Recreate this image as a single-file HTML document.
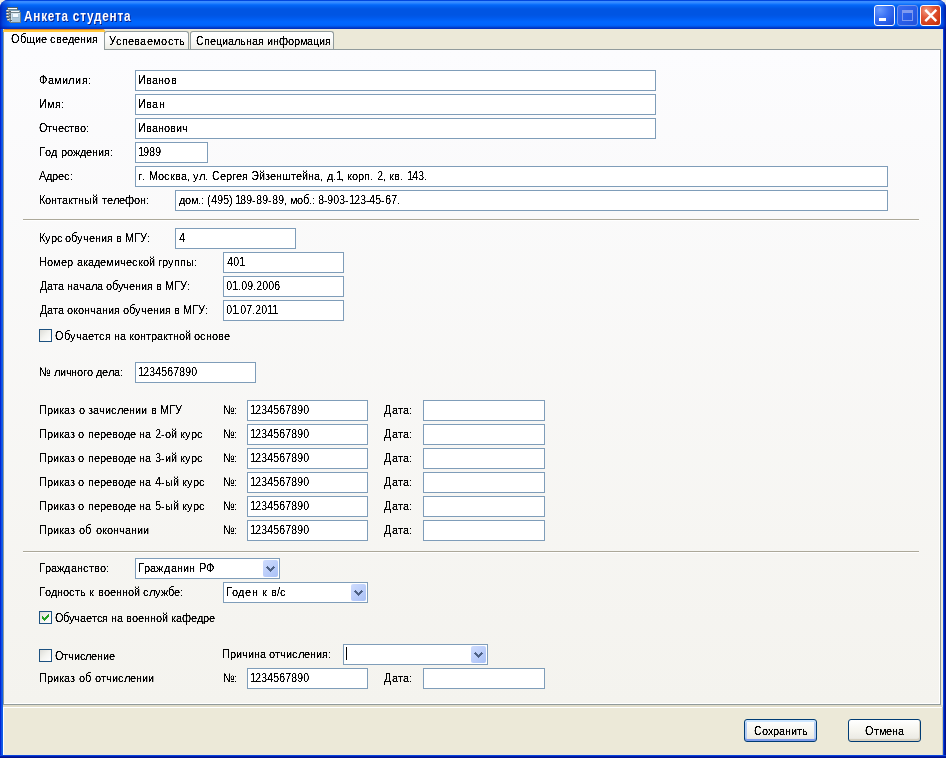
<!DOCTYPE html><html lang="ru"><head><meta charset="utf-8"><title>Анкета студента</title><style>

html,body{margin:0;padding:0}
body{width:946px;height:758px;overflow:hidden;background:#efefe8;position:relative;font-family:"Liberation Sans", sans-serif;font-size:11px;color:#000}
.a{position:absolute}
.t{position:absolute;white-space:nowrap;line-height:13px;height:13px;transform-origin:0 0;font-size:11px}
.t.title{font-weight:bold;font-size:13px;color:#fff;line-height:16px;height:16px;text-shadow:1px 1px 0 #0a1883}
.t i{display:inline-block;font-style:normal;height:13px;vertical-align:top}
.T{transform:scaleY(1.14);transform-origin:0 10.3px}
.D{transform:scale(0.95,1.14);transform-origin:3px 10.3px}
.w0{width:0px}.w1{width:1px}.w2{width:2px}.w3{width:3px}.w4{width:4px}.w5{width:5px}.w6{width:6px}.w7{width:7px}.w8{width:8px}.w9{width:9px}.w10{width:10px}.w11{width:11px}.w12{width:12px}.w13{width:13px}.w14{width:14px}.w15{width:15px}
.in{position:absolute;box-sizing:border-box;border:1px solid #7f9db9;background:#fff}
.cb{position:absolute;box-sizing:border-box;width:13px;height:13px;border:1px solid #1c5180;background:linear-gradient(135deg,#dcdcd7 0%,#f3f3ef 50%,#fff 100%)}
.dd{position:absolute;width:15px;height:17px;right:1px;top:1px;border-radius:2px;background:linear-gradient(135deg,#cfdcfd 0%,#bccefa 50%,#a8c0f6 100%)}

</style></head><body>
<div class="a" style="left:0;top:0;width:946px;height:758px;background:#0831d9;border-radius:8px 8px 0 0"></div>
<div class="a" style="left:0;top:29px;width:3px;height:729px;background:linear-gradient(90deg,#0019cf 0,#0831d9 33%,#166aee 66%,#0855dd 100%)"></div>
<div class="a" style="left:943px;top:29px;width:3px;height:729px;background:linear-gradient(90deg,#0a44dc 0,#0a44dc 1px,#001ba8 1px,#001ba8 2px,#00128c 2px)"></div>
<div class="a" style="left:0;top:755px;width:946px;height:3px;background:linear-gradient(180deg,#0a44dc 0,#0a44dc 1px,#001ba8 1px,#001ba8 2px,#00128c 2px)"></div>
<div class="a" style="left:0;top:0;width:946px;height:29px;border-radius:8px 8px 0 0;background:linear-gradient(180deg,#0047e0 0px,#0047e0 1px,#3a8cff 1px,#3a8cff 2px,#2c86ff 3px,#1376ff 4px,#0468f8 5px,#005eee 7px,#0055e3 9px,#0055e3 15px,#0058ea 17px,#005ef2 19px,#0066ff 22px,#0064fc 25px,#005cf0 26px,#0040d0 27.5px,#002cb8 29px)"></div>
<div class="a" style="left:0;top:0;width:12px;height:29px;border-radius:8px 0 0 0;background:linear-gradient(90deg,rgba(0,20,170,.8) 0,rgba(0,28,185,.45) 3px,rgba(0,40,200,0) 11px)"></div>
<div class="a" style="left:936px;top:0;width:10px;height:29px;border-radius:0 8px 0 0;background:linear-gradient(270deg,rgba(0,16,150,.85) 0,rgba(0,28,185,.4) 3px,rgba(0,40,200,0) 9px)"></div>
<div class="a" style="left:3px;top:29px;width:940px;height:726px;background:#ece9d8"></div>
<div class="a" id="ttl" style="left:24.3px;top:6px;white-space:nowrap;font-weight:bold;font-size:14px;line-height:20px;color:#fff;text-shadow:1px 1px 0 #0a1883;transform-origin:0 0;letter-spacing:0.92px;transform:scaleX(0.84)">Анкета студента</div>
<svg class="a" style="left:5px;top:7px" width="16" height="16" viewBox="0 0 16 16"><rect x="2" y="0" width="11" height="12" fill="#50616b"/><rect x="3" y="1" width="9" height="1" fill="#fdfefe"/><rect x="3" y="2" width="9" height="1" fill="#6f8794"/><rect x="4" y="3" width="11" height="12" fill="#7f9fb3"/><rect x="5" y="4" width="9" height="1" fill="#f4f9fc"/><rect x="5" y="5" width="11" height="11" fill="#6f8189"/><rect x="6" y="6" width="9" height="9" fill="#b5cede"/><rect x="6" y="6" width="9" height="1" fill="#d4e4ee"/><rect x="6" y="6" width="1" height="9" fill="#cfe0eb"/><rect x="8" y="7" width="5" height="3" fill="#f3faff"/><rect x="7" y="10" width="7" height="1" fill="#9fbbcd"/><rect x="7" y="11" width="8" height="4" fill="#aec8d9"/><rect x="1" y="3" width="4" height="2" rx="0.8" fill="#8a8c8a"/><rect x="1.5" y="3" width="2" height="1" fill="#f2f2f0"/><rect x="4" y="4" width="2" height="1" fill="#5d6468"/><rect x="1" y="6" width="4" height="2" rx="0.8" fill="#8a8c8a"/><rect x="1.5" y="6" width="2" height="1" fill="#f2f2f0"/><rect x="4" y="7" width="2" height="1" fill="#5d6468"/><rect x="1" y="9" width="4" height="2" rx="0.8" fill="#8a8c8a"/><rect x="1.5" y="9" width="2" height="1" fill="#f2f2f0"/><rect x="4" y="10" width="2" height="1" fill="#5d6468"/><rect x="2" y="12" width="4" height="2" rx="0.8" fill="#8a8c8a"/><rect x="2.5" y="12" width="2" height="1" fill="#f2f2f0"/><rect x="5" y="13" width="2" height="1" fill="#5d6468"/></svg>
<div class="a" style="left:874px;top:5px;width:21px;height:21px;box-sizing:border-box;border:1px solid #fff;border-radius:3px;background:radial-gradient(circle at 25% 20%,#6a9bff 0%,#3b72f4 40%,#2459e4 75%,#1b46c8 100%)"></div>
<div class="a" style="left:897px;top:5px;width:21px;height:21px;box-sizing:border-box;border:1px solid #7296ee;border-radius:3px;background:linear-gradient(135deg,#3a6cf0 0%,#2a5ee8 50%,#2152dc 100%)"></div>
<div class="a" style="left:920px;top:5px;width:21px;height:21px;box-sizing:border-box;border:1px solid #fff;border-radius:3px;background:radial-gradient(circle at 30% 25%,#f0a088 0%,#e3593a 35%,#d13a14 75%,#b82a08 100%)"></div>
<div class="a" style="left:879px;top:18px;width:7px;height:3px;background:#fff"></div>
<div class="a" style="left:902px;top:10px;width:11px;height:11px;box-sizing:border-box;border:1px solid #7f9af0;border-top-width:3px"></div>
<svg class="a" style="left:920px;top:5px" width="21" height="21" viewBox="0 0 21 21"><path d="M5.3 4.9 L16.3 16.1 M16.3 4.9 L5.3 16.1" stroke="#fff" stroke-width="2.4" stroke-linecap="butt"/></svg>
<div class="a" style="left:3px;top:49px;width:938px;height:656px;box-sizing:border-box;border:1px solid #919b9c;background:linear-gradient(180deg,#fcfcfe 0%,#f4f3ee 100%);box-shadow:inset -1px -1px 0 #fff"></div>
<div class="a" style="left:104px;top:31px;width:85px;height:18px;box-sizing:border-box;border:1px solid #919b9c;border-bottom:none;border-radius:3px 3px 0 0;background:linear-gradient(180deg,#ffffff 0%,#fafaf9 50%,#f0f0ea 85%,#ecebe6 100%)"></div>
<div class="a" style="left:190px;top:31px;width:144px;height:18px;box-sizing:border-box;border:1px solid #919b9c;border-bottom:none;border-radius:3px 3px 0 0;background:linear-gradient(180deg,#ffffff 0%,#fafaf9 50%,#f0f0ea 85%,#ecebe6 100%)"></div>
<div class="a" style="left:3px;top:29px;width:102px;height:21px;box-sizing:border-box;border:1px solid #919b9c;border-bottom:none;border-top:none;border-radius:3px 3px 0 0;background:#fcfcfe"></div>
<div class="a" style="left:3px;top:29px;width:102px;height:3px;border-radius:3px 3px 0 0;background:linear-gradient(180deg,#e68b2c 0,#e68b2c 33%,#ffc73c 34%,#ffc73c 100%)"></div>
<div class="a" style="left:23px;top:219px;width:896px;height:1px;background:#aca899"></div>
<div class="a" style="left:23px;top:220px;width:896px;height:1px;background:#fff"></div>
<div class="a" style="left:23px;top:551px;width:896px;height:1px;background:#aca899"></div>
<div class="a" style="left:23px;top:552px;width:896px;height:1px;background:#fff"></div>
<div class="a" style="left:3px;top:705px;width:940px;height:2px;background:#e0dcc9"></div>
<div class="a" style="left:3px;top:707px;width:940px;height:1px;background:#fff"></div>
<div class="a" style="left:3px;top:707px;width:1px;height:48px;background:#fff"></div>
<div class="a" style="left:942px;top:707px;width:1px;height:48px;background:#c9c4ae"></div>
<div class="in" style="left:135px;top:70px;width:521px;height:21px"></div>
<div class="in" style="left:135px;top:94px;width:521px;height:21px"></div>
<div class="in" style="left:135px;top:118px;width:521px;height:21px"></div>
<div class="in" style="left:135px;top:142px;width:73px;height:21px"></div>
<div class="in" style="left:135px;top:166px;width:753px;height:21px"></div>
<div class="in" style="left:175px;top:190px;width:713px;height:21px"></div>
<div class="in" style="left:175px;top:228px;width:121px;height:21px"></div>
<div class="in" style="left:223px;top:252px;width:121px;height:21px"></div>
<div class="in" style="left:223px;top:276px;width:121px;height:21px"></div>
<div class="in" style="left:223px;top:300px;width:121px;height:21px"></div>
<div class="in" style="left:135px;top:362px;width:121px;height:21px"></div>
<div class="in" style="left:247px;top:400px;width:121px;height:21px"></div>
<div class="in" style="left:423px;top:400px;width:122px;height:21px"></div>
<div class="in" style="left:247px;top:424px;width:121px;height:21px"></div>
<div class="in" style="left:423px;top:424px;width:122px;height:21px"></div>
<div class="in" style="left:247px;top:448px;width:121px;height:21px"></div>
<div class="in" style="left:423px;top:448px;width:122px;height:21px"></div>
<div class="in" style="left:247px;top:472px;width:121px;height:21px"></div>
<div class="in" style="left:423px;top:472px;width:122px;height:21px"></div>
<div class="in" style="left:247px;top:496px;width:121px;height:21px"></div>
<div class="in" style="left:423px;top:496px;width:122px;height:21px"></div>
<div class="in" style="left:247px;top:520px;width:121px;height:21px"></div>
<div class="in" style="left:423px;top:520px;width:122px;height:21px"></div>
<div class="in" style="left:247px;top:668px;width:121px;height:21px"></div>
<div class="in" style="left:423px;top:668px;width:122px;height:21px"></div>
<div class="in" style="left:135px;top:558px;width:145px;height:21px"><div class="dd"></div><svg class="a" style="right:1px;top:1px" width="15" height="17" viewBox="0 0 15 17" shape-rendering="crispEdges"><rect x="4" y="6" width="1" height="1" fill="#4d6185"/><rect x="10" y="6" width="1" height="1" fill="#4d6185"/><rect x="3" y="7" width="3" height="1" fill="#4d6185"/><rect x="9" y="7" width="3" height="1" fill="#4d6185"/><rect x="4" y="8" width="3" height="1" fill="#4d6185"/><rect x="8" y="8" width="3" height="1" fill="#4d6185"/><rect x="5" y="9" width="5" height="1" fill="#4d6185"/><rect x="6" y="10" width="3" height="1" fill="#4d6185"/><rect x="7" y="11" width="1" height="1" fill="#4d6185"/></svg></div>
<div class="in" style="left:223px;top:582px;width:145px;height:21px"><div class="dd"></div><svg class="a" style="right:1px;top:1px" width="15" height="17" viewBox="0 0 15 17" shape-rendering="crispEdges"><rect x="4" y="6" width="1" height="1" fill="#4d6185"/><rect x="10" y="6" width="1" height="1" fill="#4d6185"/><rect x="3" y="7" width="3" height="1" fill="#4d6185"/><rect x="9" y="7" width="3" height="1" fill="#4d6185"/><rect x="4" y="8" width="3" height="1" fill="#4d6185"/><rect x="8" y="8" width="3" height="1" fill="#4d6185"/><rect x="5" y="9" width="5" height="1" fill="#4d6185"/><rect x="6" y="10" width="3" height="1" fill="#4d6185"/><rect x="7" y="11" width="1" height="1" fill="#4d6185"/></svg></div>
<div class="in" style="left:343px;top:644px;width:145px;height:21px"><div class="dd"></div><svg class="a" style="right:1px;top:1px" width="15" height="17" viewBox="0 0 15 17" shape-rendering="crispEdges"><rect x="4" y="6" width="1" height="1" fill="#4d6185"/><rect x="10" y="6" width="1" height="1" fill="#4d6185"/><rect x="3" y="7" width="3" height="1" fill="#4d6185"/><rect x="9" y="7" width="3" height="1" fill="#4d6185"/><rect x="4" y="8" width="3" height="1" fill="#4d6185"/><rect x="8" y="8" width="3" height="1" fill="#4d6185"/><rect x="5" y="9" width="5" height="1" fill="#4d6185"/><rect x="6" y="10" width="3" height="1" fill="#4d6185"/><rect x="7" y="11" width="1" height="1" fill="#4d6185"/></svg></div>
<div class="a" style="left:346px;top:647px;width:1px;height:13px;background:#000"></div>
<div class="cb" style="left:39px;top:329px"></div>
<div class="cb" style="left:39px;top:611px"><svg class="a" style="left:0;top:0" width="11" height="11" viewBox="0 0 11 11" shape-rendering="crispEdges"><rect x="2" y="4" width="1" height="3" fill="#21a121"/><rect x="3" y="5" width="1" height="3" fill="#21a121"/><rect x="4" y="6" width="1" height="3" fill="#21a121"/><rect x="5" y="5" width="1" height="3" fill="#21a121"/><rect x="6" y="4" width="1" height="3" fill="#21a121"/><rect x="7" y="3" width="1" height="3" fill="#21a121"/><rect x="8" y="2" width="1" height="3" fill="#21a121"/></svg></div>
<div class="cb" style="left:39px;top:649px"></div>
<div class="a" style="left:744px;top:719px;width:73px;height:23px;box-sizing:border-box;border:1px solid #003c74;border-radius:3px;background:linear-gradient(180deg,#ffffff 0%,#f6f5ef 50%,#ecebe5 86%,#d6d0c5 100%);box-shadow:inset 0 2px 0 #cee7ff, inset 0 -2px 0 #7d9bea, inset 2px 0 0 #b4cdf5, inset -2px 0 0 #b4cdf5"></div>
<div class="a" style="left:848px;top:719px;width:73px;height:23px;box-sizing:border-box;border:1px solid #003c74;border-radius:3px;background:linear-gradient(180deg,#ffffff 0%,#f6f5ef 50%,#ecebe5 86%,#d6d0c5 100%);box-shadow:inset -1px -2px 0 0 #d6d0c0"></div>
<svg width="0" height="0" style="position:absolute"><filter id="thr" x="0" y="0" width="100%" height="100%" color-interpolation-filters="sRGB"><feComponentTransfer><feFuncA type="linear" slope="4.000" intercept="-1.200"/></feComponentTransfer></filter></svg>
<div class="a" style="left:0;top:0;width:946px;height:758px;filter:url(#thr);">
<div class="t" style="left:11px;top:33px;"><i class="w9 T">О</i><i class="w6 T">б</i><i class="w9">щ</i><i class="w6">и</i><i class="w6">е</i><i class="w3"></i><i class="w6">с</i><i class="w6">в</i><i class="w6">е</i><i class="w6">д</i><i class="w6">е</i><i class="w6">н</i><i class="w6">и</i><i class="w6">я</i></div>
<div class="t" style="left:109px;top:35px;"><i class="w7 T">У</i><i class="w6">с</i><i class="w6">п</i><i class="w6">е</i><i class="w6">в</i><i class="w7">а</i><i class="w6">е</i><i class="w8">м</i><i class="w7">о</i><i class="w6">с</i><i class="w5">т</i><i class="w6">ь</i></div>
<div class="t" style="left:196px;top:35px;"><i class="w8 T">С</i><i class="w6">п</i><i class="w6">е</i><i class="w6">ц</i><i class="w6">и</i><i class="w6">а</i><i class="w6">л</i><i class="w6">ь</i><i class="w6">н</i><i class="w6">а</i><i class="w6">я</i><i class="w3"></i><i class="w6">и</i><i class="w6">н</i><i class="w9 T">ф</i><i class="w6">о</i><i class="w6">р</i><i class="w7">м</i><i class="w6">а</i><i class="w6">ц</i><i class="w6">и</i><i class="w6">я</i></div>
<div class="t" style="left:39px;top:74px;"><i class="w9 T">Ф</i><i class="w6">а</i><i class="w8">м</i><i class="w6">и</i><i class="w7">л</i><i class="w7">и</i><i class="w6">я</i><i class="w3">:</i></div>
<div class="t" style="left:39px;top:98px;"><i class="w8 T">И</i><i class="w8">м</i><i class="w6">я</i><i class="w3">:</i></div>
<div class="t" style="left:39px;top:122px;"><i class="w8 T">О</i><i class="w5">т</i><i class="w6">ч</i><i class="w6">е</i><i class="w5">с</i><i class="w5">т</i><i class="w6">в</i><i class="w6">о</i><i class="w3">:</i></div>
<div class="t" style="left:39px;top:146px;"><i class="w6 T">Г</i><i class="w6">о</i><i class="w6">д</i><i class="w4"></i><i class="w6">р</i><i class="w6">о</i><i class="w7">ж</i><i class="w6">д</i><i class="w6">е</i><i class="w6">н</i><i class="w6">и</i><i class="w6">я</i><i class="w3">:</i></div>
<div class="t" style="left:39px;top:170px;"><i class="w7 T">А</i><i class="w6">д</i><i class="w6">р</i><i class="w6">е</i><i class="w6">с</i><i class="w3">:</i></div>
<div class="t" style="left:39px;top:194px;"><i class="w6 T">К</i><i class="w6">о</i><i class="w6">н</i><i class="w5">т</i><i class="w6">а</i><i class="w5">к</i><i class="w5">т</i><i class="w6">н</i><i class="w8">ы</i><i class="w6 T">й</i><i class="w4"></i><i class="w5">т</i><i class="w6">е</i><i class="w6">л</i><i class="w6">е</i><i class="w9 T">ф</i><i class="w6">о</i><i class="w6">н</i><i class="w3">:</i></div>
<div class="t" style="left:39px;top:232px;"><i class="w6 T">К</i><i class="w6">у</i><i class="w6">р</i><i class="w5">с</i><i class="w3"></i><i class="w6">о</i><i class="w6 T">б</i><i class="w6">у</i><i class="w6">ч</i><i class="w6">е</i><i class="w6">н</i><i class="w6">и</i><i class="w6">я</i><i class="w3"></i><i class="w6">в</i><i class="w3"></i><i class="w9 T">М</i><i class="w6 T">Г</i><i class="w7 T">У</i><i class="w3">:</i></div>
<div class="t" style="left:39px;top:256px;"><i class="w8 T">Н</i><i class="w6">о</i><i class="w8">м</i><i class="w6">е</i><i class="w6">р</i><i class="w4"></i><i class="w6">а</i><i class="w5">к</i><i class="w6">а</i><i class="w6">д</i><i class="w6">е</i><i class="w8">м</i><i class="w6">и</i><i class="w6">ч</i><i class="w6">е</i><i class="w6">с</i><i class="w5">к</i><i class="w6">о</i><i class="w6 T">й</i><i class="w3"></i><i class="w4">г</i><i class="w6">р</i><i class="w6">у</i><i class="w6">п</i><i class="w6">п</i><i class="w8">ы</i><i class="w3">:</i></div>
<div class="t" style="left:40px;top:280px;"><i class="w7 T">Д</i><i class="w6">а</i><i class="w5">т</i><i class="w6">а</i><i class="w3"></i><i class="w6">н</i><i class="w6">а</i><i class="w6">ч</i><i class="w6">а</i><i class="w6">л</i><i class="w6">а</i><i class="w3"></i><i class="w6">о</i><i class="w6 T">б</i><i class="w5">у</i><i class="w6">ч</i><i class="w6">е</i><i class="w6">н</i><i class="w6">и</i><i class="w6">я</i><i class="w3"></i><i class="w6">в</i><i class="w3"></i><i class="w9 T">М</i><i class="w6 T">Г</i><i class="w7 T">У</i><i class="w3">:</i></div>
<div class="t" style="left:40px;top:304px;"><i class="w7 T">Д</i><i class="w6">а</i><i class="w5">т</i><i class="w6">а</i><i class="w3"></i><i class="w6">о</i><i class="w5">к</i><i class="w6">о</i><i class="w6">н</i><i class="w6">ч</i><i class="w6">а</i><i class="w6">н</i><i class="w6">и</i><i class="w6">я</i><i class="w3"></i><i class="w6">о</i><i class="w6 T">б</i><i class="w6">у</i><i class="w6">ч</i><i class="w6">е</i><i class="w6">н</i><i class="w6">и</i><i class="w6">я</i><i class="w3"></i><i class="w6">в</i><i class="w3"></i><i class="w9 T">М</i><i class="w6 T">Г</i><i class="w7 T">У</i><i class="w3">:</i></div>
<div class="t" style="left:55px;top:330px;"><i class="w9 T">О</i><i class="w6 T">б</i><i class="w6">у</i><i class="w6">ч</i><i class="w6">а</i><i class="w6">е</i><i class="w5">т</i><i class="w6">с</i><i class="w6">я</i><i class="w3"></i><i class="w6">н</i><i class="w6">а</i><i class="w3"></i><i class="w5">к</i><i class="w6">о</i><i class="w6">н</i><i class="w5">т</i><i class="w6">р</i><i class="w6">а</i><i class="w5">к</i><i class="w5">т</i><i class="w6">н</i><i class="w6">о</i><i class="w6 T">й</i><i class="w3"></i><i class="w6">о</i><i class="w6">с</i><i class="w6">н</i><i class="w6">о</i><i class="w6">в</i><i class="w6">е</i></div>
<div class="t" style="left:39px;top:366px;"><i class="w12 T">№</i><i class="w3"></i><i class="w6">л</i><i class="w6">и</i><i class="w5">ч</i><i class="w6">н</i><i class="w6">о</i><i class="w4">г</i><i class="w6">о</i><i class="w3"></i><i class="w6">д</i><i class="w6">е</i><i class="w6">л</i><i class="w6">а</i><i class="w3">:</i></div>
<div class="t" style="left:39px;top:404px;"><i class="w8 T">П</i><i class="w6">р</i><i class="w6">и</i><i class="w5">к</i><i class="w6">а</i><i class="w5">з</i><i class="w4"></i><i class="w6">о</i><i class="w3"></i><i class="w5">з</i><i class="w6">а</i><i class="w6">ч</i><i class="w6">и</i><i class="w6">с</i><i class="w6">л</i><i class="w6">е</i><i class="w6">н</i><i class="w6">и</i><i class="w6">и</i><i class="w4"></i><i class="w6">в</i><i class="w3"></i><i class="w9 T">М</i><i class="w6 T">Г</i><i class="w7 T">У</i></div>
<div class="t" style="left:223px;top:404px;"><i class="w11 T">№</i><i class="w3">:</i></div>
<div class="t" style="left:384px;top:404px;"><i class="w8 T">Д</i><i class="w6">а</i><i class="w5">т</i><i class="w6">а</i><i class="w3">:</i></div>
<div class="t" style="left:250px;top:404px;"><i class="w5 D">1</i><i class="w6 D">2</i><i class="w6 D">3</i><i class="w6 D">4</i><i class="w6 D">5</i><i class="w6 D">6</i><i class="w6 D">7</i><i class="w6 D">8</i><i class="w6 D">9</i><i class="w6 D">0</i></div>
<div class="t" style="left:39px;top:428px;"><i class="w8 T">П</i><i class="w6">р</i><i class="w6">и</i><i class="w5">к</i><i class="w6">а</i><i class="w5">з</i><i class="w3"></i><i class="w6">о</i><i class="w4"></i><i class="w6">п</i><i class="w6">е</i><i class="w6">р</i><i class="w6">е</i><i class="w6">в</i><i class="w6">о</i><i class="w6">д</i><i class="w6">е</i><i class="w3"></i><i class="w6">н</i><i class="w6">а</i><i class="w4"></i><i class="w6 D">2</i><i class="w4">-</i><i class="w6">о</i><i class="w6 T">й</i><i class="w3"></i><i class="w5">к</i><i class="w6">у</i><i class="w6">р</i><i class="w6">с</i></div>
<div class="t" style="left:223px;top:428px;"><i class="w11 T">№</i><i class="w3">:</i></div>
<div class="t" style="left:384px;top:428px;"><i class="w8 T">Д</i><i class="w6">а</i><i class="w5">т</i><i class="w6">а</i><i class="w3">:</i></div>
<div class="t" style="left:250px;top:428px;"><i class="w5 D">1</i><i class="w6 D">2</i><i class="w6 D">3</i><i class="w6 D">4</i><i class="w6 D">5</i><i class="w6 D">6</i><i class="w6 D">7</i><i class="w6 D">8</i><i class="w6 D">9</i><i class="w6 D">0</i></div>
<div class="t" style="left:39px;top:452px;"><i class="w8 T">П</i><i class="w6">р</i><i class="w6">и</i><i class="w5">к</i><i class="w6">а</i><i class="w5">з</i><i class="w3"></i><i class="w6">о</i><i class="w4"></i><i class="w6">п</i><i class="w6">е</i><i class="w6">р</i><i class="w6">е</i><i class="w6">в</i><i class="w6">о</i><i class="w6">д</i><i class="w6">е</i><i class="w3"></i><i class="w6">н</i><i class="w6">а</i><i class="w4"></i><i class="w6 D">3</i><i class="w4">-</i><i class="w6">и</i><i class="w6 T">й</i><i class="w3"></i><i class="w5">к</i><i class="w6">у</i><i class="w6">р</i><i class="w6">с</i></div>
<div class="t" style="left:223px;top:452px;"><i class="w11 T">№</i><i class="w3">:</i></div>
<div class="t" style="left:384px;top:452px;"><i class="w8 T">Д</i><i class="w6">а</i><i class="w5">т</i><i class="w6">а</i><i class="w3">:</i></div>
<div class="t" style="left:250px;top:452px;"><i class="w5 D">1</i><i class="w6 D">2</i><i class="w6 D">3</i><i class="w6 D">4</i><i class="w6 D">5</i><i class="w6 D">6</i><i class="w6 D">7</i><i class="w6 D">8</i><i class="w6 D">9</i><i class="w6 D">0</i></div>
<div class="t" style="left:39px;top:476px;"><i class="w8 T">П</i><i class="w6">р</i><i class="w6">и</i><i class="w5">к</i><i class="w6">а</i><i class="w5">з</i><i class="w3"></i><i class="w6">о</i><i class="w4"></i><i class="w6">п</i><i class="w6">е</i><i class="w6">р</i><i class="w6">е</i><i class="w6">в</i><i class="w6">о</i><i class="w6">д</i><i class="w6">е</i><i class="w3"></i><i class="w6">н</i><i class="w6">а</i><i class="w4"></i><i class="w6 D">4</i><i class="w4">-</i><i class="w8">ы</i><i class="w6 T">й</i><i class="w3"></i><i class="w5">к</i><i class="w6">у</i><i class="w6">р</i><i class="w6">с</i></div>
<div class="t" style="left:223px;top:476px;"><i class="w11 T">№</i><i class="w3">:</i></div>
<div class="t" style="left:384px;top:476px;"><i class="w8 T">Д</i><i class="w6">а</i><i class="w5">т</i><i class="w6">а</i><i class="w3">:</i></div>
<div class="t" style="left:250px;top:476px;"><i class="w5 D">1</i><i class="w6 D">2</i><i class="w6 D">3</i><i class="w6 D">4</i><i class="w6 D">5</i><i class="w6 D">6</i><i class="w6 D">7</i><i class="w6 D">8</i><i class="w6 D">9</i><i class="w6 D">0</i></div>
<div class="t" style="left:39px;top:500px;"><i class="w8 T">П</i><i class="w6">р</i><i class="w6">и</i><i class="w5">к</i><i class="w6">а</i><i class="w5">з</i><i class="w3"></i><i class="w6">о</i><i class="w4"></i><i class="w6">п</i><i class="w6">е</i><i class="w6">р</i><i class="w6">е</i><i class="w6">в</i><i class="w6">о</i><i class="w6">д</i><i class="w6">е</i><i class="w3"></i><i class="w6">н</i><i class="w6">а</i><i class="w4"></i><i class="w6 D">5</i><i class="w4">-</i><i class="w8">ы</i><i class="w6 T">й</i><i class="w3"></i><i class="w5">к</i><i class="w6">у</i><i class="w6">р</i><i class="w6">с</i></div>
<div class="t" style="left:223px;top:500px;"><i class="w11 T">№</i><i class="w3">:</i></div>
<div class="t" style="left:384px;top:500px;"><i class="w8 T">Д</i><i class="w6">а</i><i class="w5">т</i><i class="w6">а</i><i class="w3">:</i></div>
<div class="t" style="left:250px;top:500px;"><i class="w5 D">1</i><i class="w6 D">2</i><i class="w6 D">3</i><i class="w6 D">4</i><i class="w6 D">5</i><i class="w6 D">6</i><i class="w6 D">7</i><i class="w6 D">8</i><i class="w6 D">9</i><i class="w6 D">0</i></div>
<div class="t" style="left:39px;top:524px;"><i class="w8 T">П</i><i class="w6">р</i><i class="w6">и</i><i class="w5">к</i><i class="w6">а</i><i class="w5">з</i><i class="w4"></i><i class="w6">о</i><i class="w7 T">б</i><i class="w4"></i><i class="w6">о</i><i class="w5">к</i><i class="w6">о</i><i class="w6">н</i><i class="w6">ч</i><i class="w6">а</i><i class="w6">н</i><i class="w6">и</i><i class="w6">и</i></div>
<div class="t" style="left:223px;top:524px;"><i class="w11 T">№</i><i class="w3">:</i></div>
<div class="t" style="left:384px;top:524px;"><i class="w8 T">Д</i><i class="w6">а</i><i class="w5">т</i><i class="w6">а</i><i class="w3">:</i></div>
<div class="t" style="left:250px;top:524px;"><i class="w5 D">1</i><i class="w6 D">2</i><i class="w6 D">3</i><i class="w6 D">4</i><i class="w6 D">5</i><i class="w6 D">6</i><i class="w6 D">7</i><i class="w6 D">8</i><i class="w6 D">9</i><i class="w6 D">0</i></div>
<div class="t" style="left:39px;top:562px;"><i class="w6 T">Г</i><i class="w6">р</i><i class="w6">а</i><i class="w7">ж</i><i class="w7">д</i><i class="w6">а</i><i class="w6">н</i><i class="w6">с</i><i class="w5">т</i><i class="w6">в</i><i class="w6">о</i><i class="w3">:</i></div>
<div class="t" style="left:39px;top:586px;"><i class="w6 T">Г</i><i class="w6">о</i><i class="w6">д</i><i class="w6">н</i><i class="w6">о</i><i class="w6">с</i><i class="w5">т</i><i class="w6">ь</i><i class="w3"></i><i class="w5">к</i><i class="w4"></i><i class="w6">в</i><i class="w6">о</i><i class="w6">е</i><i class="w6">н</i><i class="w6">н</i><i class="w6">о</i><i class="w6 T">й</i><i class="w3"></i><i class="w6">с</i><i class="w6">л</i><i class="w6">у</i><i class="w7">ж</i><i class="w6 T">б</i><i class="w6">е</i><i class="w3">:</i></div>
<div class="t" style="left:55px;top:612px;"><i class="w8 T">О</i><i class="w6 T">б</i><i class="w5">у</i><i class="w6">ч</i><i class="w6">а</i><i class="w6">е</i><i class="w5">т</i><i class="w5">с</i><i class="w6">я</i><i class="w3"></i><i class="w6">н</i><i class="w6">а</i><i class="w3"></i><i class="w6">в</i><i class="w6">о</i><i class="w6">е</i><i class="w6">н</i><i class="w6">н</i><i class="w6">о</i><i class="w6 T">й</i><i class="w3"></i><i class="w5">к</i><i class="w6">а</i><i class="w9 T">ф</i><i class="w6">е</i><i class="w6">д</i><i class="w6">р</i><i class="w6">е</i></div>
<div class="t" style="left:55px;top:650px;"><i class="w8 T">О</i><i class="w5">т</i><i class="w6">ч</i><i class="w6">и</i><i class="w5">с</i><i class="w6">л</i><i class="w6">е</i><i class="w6">н</i><i class="w6">и</i><i class="w6">е</i></div>
<div class="t" style="left:222px;top:648px;"><i class="w8 T">П</i><i class="w6">р</i><i class="w6">и</i><i class="w6">ч</i><i class="w6">и</i><i class="w6">н</i><i class="w6">а</i><i class="w3"></i><i class="w6">о</i><i class="w5">т</i><i class="w6">ч</i><i class="w6">и</i><i class="w6">с</i><i class="w6">л</i><i class="w6">е</i><i class="w6">н</i><i class="w6">и</i><i class="w6">я</i><i class="w3">:</i></div>
<div class="t" style="left:39px;top:672px;"><i class="w8 T">П</i><i class="w6">р</i><i class="w6">и</i><i class="w5">к</i><i class="w6">а</i><i class="w5">з</i><i class="w4"></i><i class="w6">о</i><i class="w6 T">б</i><i class="w4"></i><i class="w6">о</i><i class="w5">т</i><i class="w6">ч</i><i class="w6">и</i><i class="w6">с</i><i class="w6">л</i><i class="w6">е</i><i class="w6">н</i><i class="w6">и</i><i class="w6">и</i></div>
<div class="t" style="left:223px;top:672px;"><i class="w11 T">№</i><i class="w3">:</i></div>
<div class="t" style="left:384px;top:672px;"><i class="w8 T">Д</i><i class="w6">а</i><i class="w5">т</i><i class="w6">а</i><i class="w3">:</i></div>
<div class="t" style="left:250px;top:672px;"><i class="w5 D">1</i><i class="w6 D">2</i><i class="w6 D">3</i><i class="w6 D">4</i><i class="w6 D">5</i><i class="w6 D">6</i><i class="w6 D">7</i><i class="w6 D">8</i><i class="w6 D">9</i><i class="w6 D">0</i></div>
<div class="t" style="left:138px;top:74px;"><i class="w8 T">И</i><i class="w6">в</i><i class="w6">а</i><i class="w6">н</i><i class="w7">о</i><i class="w6">в</i></div>
<div class="t" style="left:138px;top:98px;"><i class="w8 T">И</i><i class="w6">в</i><i class="w7">а</i><i class="w6">н</i></div>
<div class="t" style="left:138px;top:122px;"><i class="w8 T">И</i><i class="w6">в</i><i class="w6">а</i><i class="w6">н</i><i class="w6">о</i><i class="w6">в</i><i class="w6">и</i><i class="w6">ч</i></div>
<div class="t" style="left:138px;top:146px;"><i class="w5 D">1</i><i class="w6 D">9</i><i class="w6 D">8</i><i class="w6 D">9</i></div>
<div class="t" style="left:138px;top:170px;"><i class="w4">г</i><i class="w3">.</i><i class="w4"></i><i class="w9 T">М</i><i class="w6">о</i><i class="w6">с</i><i class="w5">к</i><i class="w6">в</i><i class="w6">а</i><i class="w3">,</i><i class="w3"></i><i class="w6">у</i><i class="w6">л</i><i class="w3">.</i><i class="w4"></i><i class="w8 T">С</i><i class="w6">е</i><i class="w6">р</i><i class="w4">г</i><i class="w6">е</i><i class="w6">я</i><i class="w3"></i><i class="w8 T">Э</i><i class="w6 T">й</i><i class="w5">з</i><i class="w6">е</i><i class="w6">н</i><i class="w9">ш</i><i class="w5">т</i><i class="w6">е</i><i class="w6 T">й</i><i class="w6">н</i><i class="w6">а</i><i class="w3">,</i><i class="w4"></i><i class="w6">д</i><i class="w3">.</i><i class="w5 D">1</i><i class="w3">,</i><i class="w3"></i><i class="w5">к</i><i class="w6">о</i><i class="w6">р</i><i class="w6">п</i><i class="w3">.</i><i class="w4"></i><i class="w6 D">2</i><i class="w3">,</i><i class="w3"></i><i class="w5">к</i><i class="w6">в</i><i class="w3">.</i><i class="w4"></i><i class="w5 D">1</i><i class="w6 D">4</i><i class="w6 D">3</i><i class="w3">.</i></div>
<div class="t" style="left:179px;top:194px;"><i class="w6">д</i><i class="w6">о</i><i class="w7">м</i><i class="w3">.</i><i class="w3">:</i><i class="w3"></i><i class="w4 T">(</i><i class="w6 D">4</i><i class="w6 D">9</i><i class="w6 D">5</i><i class="w3 T">)</i><i class="w3"></i><i class="w5 D">1</i><i class="w6 D">8</i><i class="w6 D">9</i><i class="w4">-</i><i class="w6 D">8</i><i class="w6 D">9</i><i class="w4">-</i><i class="w6 D">8</i><i class="w6 D">9</i><i class="w3">,</i><i class="w3"></i><i class="w7">м</i><i class="w6">о</i><i class="w6 T">б</i><i class="w3">.</i><i class="w3">:</i><i class="w3"></i><i class="w6 D">8</i><i class="w3">-</i><i class="w6 D">9</i><i class="w6 D">0</i><i class="w6 D">3</i><i class="w4">-</i><i class="w5 D">1</i><i class="w6 D">2</i><i class="w6 D">3</i><i class="w3">-</i><i class="w6 D">4</i><i class="w6 D">5</i><i class="w4">-</i><i class="w6 D">6</i><i class="w6 D">7</i><i class="w3">.</i></div>
<div class="t" style="left:179px;top:232px;"><i class="w6 D">4</i></div>
<div class="t" style="left:227px;top:256px;"><i class="w6 D">4</i><i class="w6 D">0</i><i class="w5 D">1</i></div>
<div class="t" style="left:226px;top:280px;"><i class="w6 D">0</i><i class="w6 D">1</i><i class="w3">.</i><i class="w6 D">0</i><i class="w6 D">9</i><i class="w3">.</i><i class="w6 D">2</i><i class="w6 D">0</i><i class="w6 D">0</i><i class="w6 D">6</i></div>
<div class="t" style="left:226px;top:304px;"><i class="w6 D">0</i><i class="w5 D">1</i><i class="w3">.</i><i class="w6 D">0</i><i class="w6 D">7</i><i class="w3">.</i><i class="w6 D">2</i><i class="w6 D">0</i><i class="w5 D">1</i><i class="w5 D">1</i></div>
<div class="t" style="left:138px;top:366px;"><i class="w5 D">1</i><i class="w6 D">2</i><i class="w6 D">3</i><i class="w6 D">4</i><i class="w6 D">5</i><i class="w6 D">6</i><i class="w6 D">7</i><i class="w6 D">8</i><i class="w6 D">9</i><i class="w6 D">0</i></div>
<div class="t" style="left:138px;top:562px;"><i class="w6 T">Г</i><i class="w6">р</i><i class="w6">а</i><i class="w8">ж</i><i class="w7">д</i><i class="w6">а</i><i class="w6">н</i><i class="w6">и</i><i class="w6">н</i><i class="w4"></i><i class="w7 T">Р</i><i class="w8 T">Ф</i></div>
<div class="t" style="left:226px;top:586px;"><i class="w6 T">Г</i><i class="w6">о</i><i class="w7">д</i><i class="w7">е</i><i class="w6">н</i><i class="w4"></i><i class="w5">к</i><i class="w4"></i><i class="w6">в</i><i class="w3 T">/</i><i class="w6">с</i></div>
<div class="t" style="left:754px;top:725px;"><i class="w8 T">С</i><i class="w6">о</i><i class="w5">х</i><i class="w6">р</i><i class="w6">а</i><i class="w6">н</i><i class="w6">и</i><i class="w5">т</i><i class="w6">ь</i></div>
<div class="t" style="left:865px;top:725px;"><i class="w9 T">О</i><i class="w5">т</i><i class="w7">м</i><i class="w6">е</i><i class="w6">н</i><i class="w6">а</i></div>
</div>
</body></html>
